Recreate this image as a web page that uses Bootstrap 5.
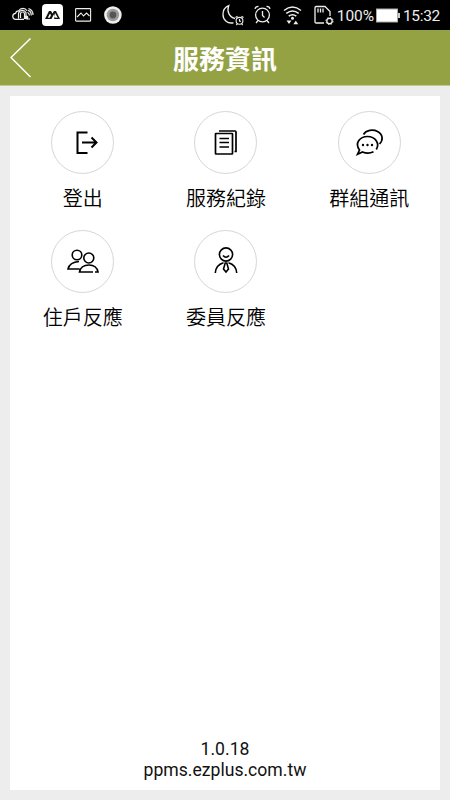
<!DOCTYPE html>
<html lang="zh-Hant">
<head>
<meta charset="utf-8">
<meta name="viewport" content="width=device-width, initial-scale=1">
<title>服務資訊</title>
<link href="https://cdn.jsdelivr.net/npm/bootstrap@5.3.0/dist/css/bootstrap.min.css" rel="stylesheet">
<style>
body{background:#ededed;color:#111;font-family:Roboto,"Noto Sans CJK TC",sans-serif}
svg{display:block;flex:none;fill:none}
.line-icon{stroke:currentColor}
.screen{height:800px;width:450px}
.statusbar{height:30px;background:#000;color:#eee;padding:0 10px 0 12px;font-size:15.500px;line-height:30px}
.statusbar span{padding-top:2px;line-height:28px}
.charge{letter-spacing:-.1px}
.clock{letter-spacing:-.3px}
.titlebar{height:56px;background:#94a244;border-bottom:1px solid #c3cc90;display:grid;grid-template-columns:50px 1fr 50px}
.titlebar h1{font-family:"Noto Sans CJK TC",sans-serif;font-size:26px;font-weight:700;line-height:54px;padding-top:1px}
.titlebar svg{margin-left:10px}
.panel{margin:10px;padding-top:15px;padding-bottom:9px}
.tiles{padding-left:1px}
.tiles .row{margin-right:-1px}
.tile{height:119px;color:#000}
.disc{width:63px;height:63px;border:1px solid #d6d6d6}
.tile-label{font-family:"Noto Sans CJK TC",sans-serif;font-size:20px;line-height:30px;margin-top:9px;font-weight:350}
.about{font-size:17.600px;line-height:21px}
</style>
<script src="https://cdn.jsdelivr.net/npm/bootstrap@5.3.0/dist/js/bootstrap.bundle.min.js"></script>
</head>
<body>
<div class="screen d-flex flex-column">
  <div class="statusbar d-flex align-items-center justify-content-between">
    <div class="d-flex align-items-center">
      <svg class="line-icon" width="22" height="30" stroke-width="1.2"><path d="M5 19.300H4a3 3 0 0 1-.4-6 3 3 0 0 1 3-2.500 5 5 0 0 1 8.500 0M5 19.300h7M8.500 18v-4a2 2 0 0 1 4 0v5M6.500 18.500v-5a4 4 0 0 1 7.500-1v5M15 19h3M15.500 12.500q2 .8 1.800 3M16 10.300q3.500 1 3.200 5.200M16.500 8.500q4.500 1.500 4.500 6.500"/><circle cx="14.500" cy="17.500" r="1.300" fill="currentColor"/></svg>
      <svg width="22" height="30" style="margin-left:8px"><rect y="4" width="21" height="22" rx="4" fill="#fff"/><path d="M3 19 7 11h2l1.500 2.500L12 11h2l4 8h-6l1-3-1.200-1.500L9.500 19z" fill="#111"/><path d="M5.800 17.800 8 13.500l1 1.800-1.300 2.500zM13.300 17.800 12.500 14l.7-.7 2.500 4.500z" fill="#fff"/></svg>
      <svg class="line-icon" width="17" height="30" style="margin-left:11px" stroke-width="1.100"><rect x=".6" y="8.600" width="15" height="12.500" rx=".7"/><path d="m2 17 4-4 2.500 3 3-3 3 3"/></svg>
      <svg width="18" height="30" style="margin-left:12px"><circle cx="8.900" cy="15" r="8.800" fill="#eee"/><circle cx="8.900" cy="15" r="6.200" fill="#999"/><circle cx="8.900" cy="15" r="3.400" fill="#555"/></svg>
    </div>
    <div class="d-flex align-items-center">
      <svg class="line-icon" width="22" height="30" stroke-width="1.300"><path d="M11.500 22.800C5 24 1 19.500 1 14.500 1 10.500 3 7.200 6.700 5.700 4.500 11.500 7.500 17.500 13 18.500"/><g stroke-width="1.100"><circle cx="17.500" cy="20.800" r="3.400"/><path d="M17.500 19v2.200h1.500M13.500 17.500l2-1.200M19.500 16.300l2 1.200M15.300 24l-1 1M19.700 24l1 1"/></g></svg>
      <svg class="line-icon" width="18" height="30" style="margin-left:10px" stroke-width="1.300"><circle cx="8.500" cy="15" r="6.900"/><path d="M8.500 11v4.500l2 2M1 8.800Q1.500 6.500 4.500 6.300M12.500 6.300Q15.500 6.500 16 8.800M4 20.500 2 23M13 20.500l2 2.500"/></svg>
      <svg class="line-icon" width="19" height="30" style="margin-left:11px" stroke-width="1.500"><path d="M1 10.500q8.500-7 17 0M3.300 13.400q6.200-5 12.400 0M5.700 16.200q3.800-3 7.600 0"/><g stroke="none" fill="currentColor"><circle cx="9.500" cy="18.300" r="1.500"/><path d="M3.500 20.500h5L6 24zM10.300 24.300h5L12.800 20.800z"/></g></svg>
      <svg class="line-icon" width="20" height="30" style="margin-left:12px" stroke-width="1.300"><path d="M10 23H2.200q-1.200 0-1.200-1.200V7.700Q1 6.500 2.200 6.500H11l5 5V16M4 8.500v4M6.500 8.500v4M9 8.500v4"/><circle cx="15.500" cy="21" r="2.700"/><circle cx="15.500" cy="21" r="3.600" stroke-width="1" stroke-dasharray="1.500 1.300"/></svg>
      <span class="charge" style="margin-left:3px">100%</span>
      <svg width="25" height="30" style="margin-left:2px"><rect x=".5" y="9" width="21" height="13" fill="#fff" stroke="#aaa"/><path d="M22 13h2v5h-2z" fill="#ccc"/></svg>
      <span class="clock" style="margin-left:2px">15:32</span>
    </div>
  </div>
  <header class="titlebar align-items-center">
    <svg width="22" height="42" stroke="#fff" stroke-width="1.500"><path d="M20.500 1.500 1 20.500 20.500 40"/></svg>
    <h1 class="m-0 text-white text-center">服務資訊</h1>
  </header>
  <main class="panel bg-white flex-grow-1 d-flex flex-column">
    <div class="tiles"><div class="row g-0">
      <div class="col-4 tile d-flex flex-column align-items-center"><div class="disc rounded-circle">
        <svg class="line-icon" width="61" height="61" stroke-width="2"><path d="M35.500 20.500H25.500v20.500H35.500"/><path d="M30 30.500h14.500M39.500 25.500l5 5-5 5"/></svg></div><div class="tile-label">登出</div></div>
      <div class="col-4 tile d-flex flex-column align-items-center"><div class="disc rounded-circle">
        <svg class="line-icon" width="61" height="61" stroke-width="1.700"><rect x="20.500" y="21.500" width="17" height="20.500" rx=".5"/><path d="M24 19h16q1 0 1 1v19.500h-1.500M24.500 26.500H34M24.500 30.500H34M24.500 35H34"/></svg></div><div class="tile-label">服務紀錄</div></div>
      <div class="col-4 tile d-flex flex-column align-items-center"><div class="disc rounded-circle">
        <svg class="line-icon" width="61" height="61" stroke-width="1.700"><path d="M24.500 22.500C27 18 34 17 38.500 19.500c5.500 3 6 8.500 2 12.500"/><path d="M34.500 39.800c-3.500 1.700-8 1.500-11 .2l-5 2.200 2-4.200C15.500 31.500 20.500 24.500 28.500 24.500S41 31.500 37.300 37.500"/><g fill="currentColor" stroke="none"><circle cx="24" cy="33" r="1.200"/><circle cx="28.500" cy="33" r="1.200"/><circle cx="33" cy="33" r="1.200"/></g></svg></div><div class="tile-label">群組通訊</div></div>
      <div class="col-4 tile d-flex flex-column align-items-center"><div class="disc rounded-circle">
        <svg class="line-icon" width="61" height="61" stroke-width="1.600"><circle cx="25" cy="24" r="4.800"/><circle cx="36.800" cy="27" r="5"/><path d="M27.500 38H16C17 33.500 20 31 27 30.500M43 41h3C45 36 42 34 37 34S28.500 36 27.500 41H41"/></svg></div><div class="tile-label">住戶反應</div></div>
      <div class="col-4 tile d-flex flex-column align-items-center"><div class="disc rounded-circle">
        <svg class="line-icon" width="61" height="61" stroke-width="1.600"><circle cx="31" cy="23.500" r="6.600"/><path d="M28 24.500q3 3.500 6 0M20.300 42c.3-5.500 3-8.800 8.200-10.300M41.700 42c-.3-5.500-3-8.800-8.200-10.300M30.200 32h1.600l1.700 6-2.500 3-2.500-3z"/></svg></div><div class="tile-label">委員反應</div></div>
    </div></div>
    <div class="about mt-auto text-center">1.0.18<br>ppms.ezplus.com.tw</div>
  </main>
</div>
</body>
</html>
